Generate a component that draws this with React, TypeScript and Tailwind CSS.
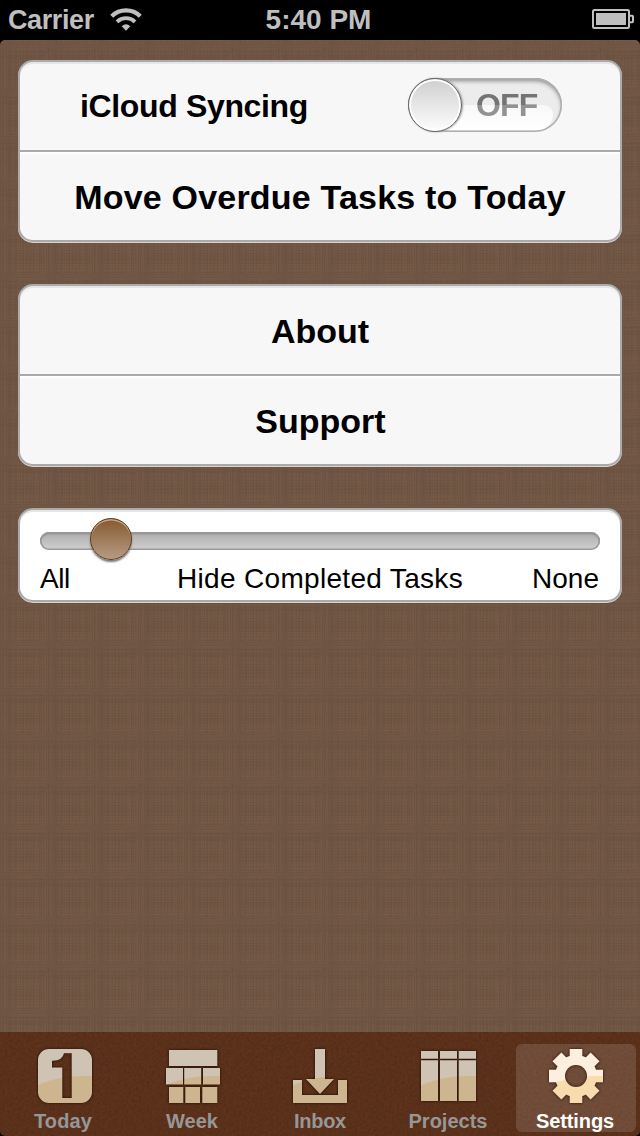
import type { ReactNode } from "react";

const SANS = "font-['Liberation_Sans',Arial,sans-serif]";

const threads = Array.from({ length: 46 }, (_, i) => ({
  at: i,
  a: ((i * i * 7 + i * 29 + 11) % 31) / 31,
  b: ((i * i * 5 + i * 23 + 5) % 37) / 37,
}));

function Linen() {
  return (
    <svg className="absolute inset-0 h-full w-full" aria-hidden="true">
      <defs>
        <pattern id="linen" width="46" height="46" patternUnits="userSpaceOnUse" y="4">
          <rect width="46" height="46" fill="#705644" />
          {threads.map((t) => (
            <g key={t.at}>
              <rect x={t.at} y={t.a * 20} width="1" height={18 + t.b * 26} fill={t.a > 0.5 ? "#8a6c52" : "#523c2e"} opacity={0.03 + t.b * 0.09} />
              <rect y={t.at} x={t.b * 20} height="1" width={18 + t.a * 26} fill={t.b > 0.5 ? "#8a6c52" : "#523c2e"} opacity={0.03 + t.a * 0.09} />
            </g>
          ))}
          <rect width="1" height="46" fill="#523c2e" opacity="0.12" />
          <rect width="46" height="1" fill="#523c2e" opacity="0.06" />
        </pattern>
      </defs>
      <rect width="100%" height="100%" fill="url(#linen)" />
    </svg>
  );
}

function Leather() {
  return (
    <svg className="absolute inset-0 h-full w-full" aria-hidden="true">
      <filter id="grain" x="0" y="0" width="100%" height="100%" colorInterpolationFilters="sRGB">
        <feTurbulence type="fractalNoise" baseFrequency="0.38" numOctaves="2" seed="4" />
        <feColorMatrix values="0 0 0 0 0.27  0 0 0 0 0.13  0 0 0 0 0.05  0.7 0 0 0 -0.12" />
      </filter>
      <rect width="100%" height="100%" fill="#60351e" />
      <rect width="100%" height="100%" filter="url(#grain)" />
    </svg>
  );
}

function StatusBar() {
  return (
    <header className="flex h-10 shrink-0 justify-between bg-black pl-2 pr-1.5 text-[28px] font-bold leading-10 text-[#bfbfbf]">
      <div className="flex w-[248px]">
        <span className="w-[102px] text-[27px] tracking-[-0.4px]">Carrier</span>
        <svg width="32" height="24" viewBox="0 0 32 24" className="mt-2" fill="none" stroke="#bfbfbf">
          <path d="M1.7 8.2A20.5 20.5 0 0 1 30.3 8.2" strokeWidth="4.2" />
          <path d="M7 13.8A13 13 0 0 1 25 13.8" strokeWidth="3.8" />
          <path d="M11.7 18.2Q16 14.2 20.3 18.2L16 22.8Z" fill="#bfbfbf" stroke="none" />
        </svg>
      </div>
      <span className="whitespace-pre">5:40 PM</span>
      <div className="flex w-[253px] justify-end">
        <svg width="42" height="20" viewBox="0 0 42 20" className="mt-[9px]" fill="none" stroke="#bfbfbf">
          <rect x="1" y="1" width="36" height="18" rx="1.5" strokeWidth="2" />
          <path d="M38 6.8h2.2q.8 0 .8.8v4.8q0 .8-.8.8H38" strokeWidth="2" />
          <rect x="4" y="4" width="30" height="12" fill="#bfbfbf" stroke="none" />
        </svg>
      </div>
    </header>
  );
}

function Card({ white, children }: { white?: boolean; children: ReactNode }) {
  return (
    <section
      className={`${white ? "bg-white" : "bg-[#f7f7f7]"} overflow-hidden rounded-[15px] border-2 border-[#aaaaaa] shadow-[0_1px_0_#d8d3cf,inset_0_2px_0_#e6e6e6]`}
    >
      {children}
    </section>
  );
}

function Row({ children, divided }: { children: ReactNode; divided?: boolean }) {
  return divided ? (
    <div className="flex h-[90px] items-center justify-center border-t-2 border-[#aaaaaa] pt-0.5 text-[34px] font-bold shadow-[inset_0_2px_0_#fff]">
      {children}
    </div>
  ) : (
    <div className="flex h-[88px] items-center justify-center pt-0.5 text-[34px] font-bold">{children}</div>
  );
}

function Toggle() {
  return (
    <div className="relative -mt-[4px] flex h-[54px] w-[154px] rounded-full bg-[#ececec] shadow-[inset_0_0_0_1.5px_#b0b0b0,inset_0_3px_4px_#8a8a8a]">
      <div className="absolute bottom-[2px] left-6 right-[9px] h-[25px] rounded-br-[24px] rounded-tr-[14px] bg-[linear-gradient(#f8f8f8,#fff)]" />
      <div className="relative h-[54px] w-[54px] rounded-full border-[1.5px] border-[#666] bg-[linear-gradient(#cfcfcf,#fdfdfd)] shadow-[inset_0_0_0_2px_#fff,1px_0_2px_#999]" />
      <span className="relative ml-[14px] bg-[linear-gradient(#747474_50%,#929292_51%)] bg-clip-text text-[32px] leading-[55px] tracking-[-0.8px] text-transparent">
        OFF
      </span>
    </div>
  );
}

function TabIcon({ id, active, children }: { id: string; active?: boolean; children: ReactNode }) {
  return (
    <svg width="64" height="64" viewBox="0 0 64 64" className="drop-shadow-[0_0_1.5px_rgba(20,6,0,0.9)]">
      <mask id={id}>{children}</mask>
      <g mask={`url(#${id})`}>
        <rect width="64" height="64" fill={active ? "#fdeedd" : "#cfc3b3"} />
        <path d="M0 44Q22 32 52 32H64V64H0Z" fill={active ? "#f9dcae" : "#cdb68f"} />
      </g>
    </svg>
  );
}

function Tab({ label, active, spacing, icon }: { label: string; active?: boolean; spacing?: string; icon: ReactNode }) {
  return (
    <div className="flex h-full w-32 justify-center pt-3">
      <div className={`flex h-[88px] w-[120px] flex-col items-center rounded-[6px] ${active ? "bg-white/13 text-white" : "text-[#979797]"}`}>
        {icon}
        <span className={`mt-[2px] text-[20px] font-bold leading-[22px] ${spacing ?? ""}`}>{label}</span>
      </div>
    </div>
  );
}

function TabBar() {
  return (
    <nav className="relative h-[104px] shrink-0 overflow-hidden">
      <Leather />
      <div className="relative flex h-full">
        <Tab
          label="Today"
          spacing="-ml-0.5 tracking-[0.1px]"
          icon={
            <TabIcon id="m-today">
              <rect x="6" y="5" width="54" height="54" rx="11" fill="white" />
              <path d="M32 9.3H39.7V54H30.3V23.5H20V16.7Q30.5 17 32 9.3Z" fill="black" />
            </TabIcon>
          }
        />
        <Tab
          label="Week"
          icon={
            <TabIcon id="m-week">
              <path d="M9 6h48.3v16H9ZM6 24h17v16.5H6ZM24.2 24h17v16.5h-17ZM43 24h17v16.5H43ZM9 43h14.3v16H9ZM25.3 43H40v16H25.3ZM42.3 43h15v16h-15Z" fill="white" />
            </TabIcon>
          }
        />
        <Tab
          label="Inbox"
          spacing="tracking-[-0.3px]"
          icon={
            <TabIcon id="m-inbox">
              <path d="M5 36H14V51H50V36H59V59H5ZM27 5H37V35H46L32 50 18 35H27Z" fill="white" />
            </TabIcon>
          }
        />
        <Tab
          label="Projects"
          icon={
            <TabIcon id="m-projects">
              <path d="M5 7h17v7.7H5ZM24 7h17v7.7H24ZM42.7 7H60v7.7H42.7ZM5 16.3h17V57H5ZM24 16.3h17V57H24ZM42.7 16.3H60V57H42.7Z" fill="white" />
            </TabIcon>
          }
        />
        <Tab
          label="Settings"
          active
          spacing="-ml-0.5 tracking-[-0.1px]"
          icon={
            <TabIcon id="m-settings" active>
              <circle cx="32" cy="32" r="21" fill="white" />
              {[0, 45, 90, 135].map((deg) => (
                <rect key={deg} x="25.7" y="5" width="12.6" height="54" fill="white" transform={`rotate(${deg} 32 32)`} />
              ))}
              <circle cx="32" cy="32" r="11" fill="black" />
            </TabIcon>
          }
        />
      </div>
    </nav>
  );
}

export default function App() {
  return (
    <div className={`flex h-[1136px] w-[640px] flex-col overflow-hidden bg-black text-black ${SANS}`}>
      <StatusBar />
      <div className="flex min-h-0 flex-1 flex-col overflow-hidden rounded-[5px]">
        <main className="relative flex-1">
          <Linen />
          <div className="relative flex flex-col gap-[42px] px-[18px] pt-5">
            <Card>
              <Row>
                <div className="flex w-[482px] items-center justify-between pl-px">
                  <span className="-mt-0.5 text-[32px] tracking-[-0.35px]">iCloud Syncing</span>
                  <div className="-mr-px">
                    <Toggle />
                  </div>
                </div>
              </Row>
              <Row divided>
                <span className="tracking-[0.2px]">Move Overdue Tasks to Today</span>
              </Row>
            </Card>
            <Card>
              <Row>About</Row>
              <Row divided>
                <span className="pl-px">Support</span>
              </Row>
            </Card>
            <Card white>
              <div className="h-[90px] px-5 pt-[22px]">
                <div className="h-[18px] rounded-full bg-[linear-gradient(#adadad,#d0d0d0)] pl-[50px] shadow-[inset_0_0_0_1.5px_#999,inset_0_2px_2px_#888]">
                  <div className="relative -top-[14px] h-[42px] w-[42px] rounded-full border border-[#5e3a18] bg-[linear-gradient(#855a30,#b79b84)] shadow-[0_2px_2px_#777,inset_0_1.5px_0.5px_#c6a98d]" />
                </div>
                <div className="mt-[13px] grid grid-cols-[100px_1fr_100px] text-[28px] leading-8">
                  <span className="tracking-[-0.4px]">All</span>
                  <span className="whitespace-nowrap text-center tracking-[0.32px]">Hide Completed Tasks</span>
                  <span className="pr-px text-right">None</span>
                </div>
              </div>
            </Card>
          </div>
        </main>
        <TabBar />
      </div>
    </div>
  );
}
